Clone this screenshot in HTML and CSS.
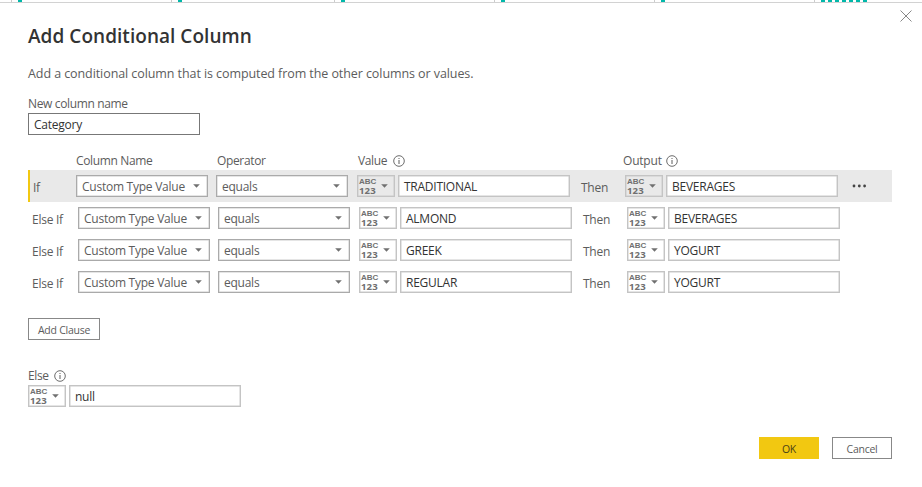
FILE: index.html
```html
<!DOCTYPE html>
<html lang="en">
<head>
<meta charset="utf-8">
<title>Add Conditional Column</title>
<link rel="stylesheet" href="styles.css">
</head>
<body>
<svg class="defs" width="0" height="0" aria-hidden="true">
  <symbol id="info" viewBox="0 0 12 12"><circle cx="6" cy="6" r="5.3" fill="none" stroke="currentColor" stroke-width=".9"/><path d="M6 5v4M6 3v1" fill="none" stroke="currentColor" stroke-width="1"/></symbol>
  <symbol id="caret" viewBox="0 0 7 4"><path d="M.2.2h6.6L3.5 3.8z" fill="currentColor"/></symbol>
</svg>
<div class="strip">
  <div class="cell c1"><i></i></div><div class="cell c2"><i></i></div><div class="cell c3"><i></i></div><div class="cell c4"><i></i></div><div class="cell c5"><i></i></div>
  <div class="cell c6"><i></i><i></i><i></i><i></i><i></i><i></i><i></i></div>
</div>
<button class="close" aria-label="Close"><svg width="12" height="12" viewBox="0 0 12 12"><path d="M.5.5l11 11M11.5.5l-11 11" fill="none" stroke="#888" stroke-width="1"/></svg></button>
<main class="dialog">
  <h1><span>Add Conditional Column</span></h1>
  <p class="desc"><span>Add a conditional column that is computed from the other columns or values.</span></p>
  <div class="label name-label"><span>New column name</span></div>
  <div class="input name"><span>Category</span></div>

  <div class="head">
    <span class="h-col">Column Name</span><span class="h-op">Operator</span><span class="h-val">Value</span><svg class="info"><use href="#info"/></svg><span class="h-out">Output</span><svg class="info"><use href="#info"/></svg>
  </div>
  <div class="clauses">
    <div class="clause active">
      <div class="kw">If</div>
      <div class="select"><span class="ctv">Custom Type Value</span><svg class="caret"><use href="#caret"/></svg></div>
      <div class="select"><span class="eq">equals</span><svg class="caret"><use href="#caret"/></svg></div>
      <div class="type"><span class="abc"><b>ABC</b><b class="num">123</b></span><svg class="caret"><use href="#caret"/></svg></div>
      <div class="input"><span>TRADITIONAL</span></div>
      <div class="then">Then</div>
      <div class="type"><span class="abc"><b>ABC</b><b class="num">123</b></span><svg class="caret"><use href="#caret"/></svg></div>
      <div class="input"><span>BEVERAGES</span></div>
      <svg class="more" width="15" height="4" viewBox="0 0 15 4"><g fill="#444"><circle cx="2" cy="2" r="1.4"/><circle cx="7.3" cy="2" r="1.4"/><circle cx="12.6" cy="2" r="1.4"/></g></svg>
    </div>
    <div class="clause">
      <div class="kw">Else If</div>
      <div class="select"><span class="ctv">Custom Type Value</span><svg class="caret"><use href="#caret"/></svg></div>
      <div class="select"><span class="eq">equals</span><svg class="caret"><use href="#caret"/></svg></div>
      <div class="type"><span class="abc"><b>ABC</b><b class="num">123</b></span><svg class="caret"><use href="#caret"/></svg></div>
      <div class="input"><span>ALMOND</span></div>
      <div class="then">Then</div>
      <div class="type"><span class="abc"><b>ABC</b><b class="num">123</b></span><svg class="caret"><use href="#caret"/></svg></div>
      <div class="input"><span>BEVERAGES</span></div>
    </div>
    <div class="clause">
      <div class="kw">Else If</div>
      <div class="select"><span class="ctv">Custom Type Value</span><svg class="caret"><use href="#caret"/></svg></div>
      <div class="select"><span class="eq">equals</span><svg class="caret"><use href="#caret"/></svg></div>
      <div class="type"><span class="abc"><b>ABC</b><b class="num">123</b></span><svg class="caret"><use href="#caret"/></svg></div>
      <div class="input"><span>GREEK</span></div>
      <div class="then">Then</div>
      <div class="type"><span class="abc"><b>ABC</b><b class="num">123</b></span><svg class="caret"><use href="#caret"/></svg></div>
      <div class="input"><span>YOGURT</span></div>
    </div>
    <div class="clause">
      <div class="kw">Else If</div>
      <div class="select"><span class="ctv">Custom Type Value</span><svg class="caret"><use href="#caret"/></svg></div>
      <div class="select"><span class="eq">equals</span><svg class="caret"><use href="#caret"/></svg></div>
      <div class="type"><span class="abc"><b>ABC</b><b class="num">123</b></span><svg class="caret"><use href="#caret"/></svg></div>
      <div class="input"><span>REGULAR</span></div>
      <div class="then">Then</div>
      <div class="type"><span class="abc"><b>ABC</b><b class="num">123</b></span><svg class="caret"><use href="#caret"/></svg></div>
      <div class="input"><span>YOGURT</span></div>
    </div>
  </div>
  <button class="btn add">Add Clause</button>
  <div class="label else-label"><span>Else</span><svg class="info"><use href="#info"/></svg></div>
  <div class="else-row">
    <div class="type"><span class="abc"><b>ABC</b><b class="num">123</b></span><svg class="caret"><use href="#caret"/></svg></div>
    <div class="input"><span>null</span></div>
  </div>
  <div class="actions"><button class="btn ok">OK</button><button class="btn">Cancel</button></div>
</main>
</body>
</html>
```
FILE: styles.css
```css
* { box-sizing: border-box; }
body { margin: 0; width: 922px; height: 487px; overflow: hidden; background: #fff; color: #5c5c5c; font: 12px/16px "Open Sans", "Noto Sans", sans-serif; letter-spacing: -.25px; }
.defs { position: absolute; }
.strip { display: flex; height: 3px; padding-left: 11px; border-bottom: 1px solid #d2d2d2; overflow: hidden; }
.cell { display: flex; flex: none; gap: 3px; width: 160px; height: 2px; padding-left: 6px; border-left: 1px solid #ccc; }
.c2 { width: 163px; }
.cell i { width: 4px; height: 2px; background: #01b8aa; }
.close { position: absolute; left: 900px; top: 10px; width: 12px; height: 12px; padding: 0; border: 0; background: none; display: block; }
.close svg { display: block; }
.dialog { padding: 0 30px 0 28px; white-space: nowrap; }
h1 { margin: 20px 0 0; height: 26px; font-size: 19px; line-height: 26px; font-weight: 600; color: #333; letter-spacing: .04px; }
.desc { margin: 16px 0 0; height: 18px; font-size: 12.5px; line-height: 18px; letter-spacing: -.08px; }
.label { height: 16px; display: flex; align-items: center; letter-spacing: -.35px; }
.name-label { margin-top: 12px; }
.name-label span { padding-top: 1px; }
.input, .select, .type { height: 22px; display: flex; align-items: center; border: 1px solid #c4c4c4; background: #fff; box-shadow: inset 0 0 0 .5px #ccc; }
.input { width: 172px; padding-left: 5px; color: #333; }
.input span, .select span { padding-top: 2px; }
.name { margin-top: 2px; border-color: #777; box-shadow: none; }
.info { width: 12px; height: 12px; flex: none; }
.head { display: flex; align-items: center; height: 16px; margin: 18px 0 1px 48px; letter-spacing: -.35px; }
.h-col { width: 141px; }
.h-op { width: 141px; }
.h-val { width: 35px; }
.h-out { margin-left: 218px; width: 43px; letter-spacing: -.2px; }
.clause { display: flex; align-items: center; height: 32px; width: 864px; padding-left: 4px; }
.active { background: #e9e9e9; border-left: 2px solid #f2c811; padding-left: 3px; }
.kw { width: 46px; }
.active .kw { width: 43px; }
.kw, .then { padding-top: 3px; }
.select { width: 132px; margin-right: 8px; padding: 0 7px 0 5px; justify-content: space-between; border-color: #aaa; }
.select + .select { margin-right: 9px; }
.caret { width: 7px; height: 4px; flex: none; color: #707070; }
.type { width: 38px; padding: 0 6px 0 1px; justify-content: space-between; margin-right: 3px; }
.active .type { background: transparent; }
.then { width: 55px; padding-left: 11px; }
.abc { width: 18px; display: block; }
.abc b { display: block; font: 700 8px/9px "Liberation Sans", sans-serif; color: #707070; letter-spacing: 0; }
.abc .num { font-family: "Open Sans", sans-serif; font-size: 9.6px; line-height: 9px; letter-spacing: .1px; }
.more { margin-left: 14px; }
.btn { width: 60px; height: 22px; padding: 1px 0 0; border: 1px solid #888; background: #fff; color: #5c5c5c; font: 10.5px/18px "Open Sans", sans-serif; letter-spacing: -.25px; }
.add { display: block; width: 72px; margin-top: 20px; }
.else-label { margin-top: 28px; gap: 5px; }
.else-row { display: flex; margin-top: 1px; }
.actions { display: flex; justify-content: flex-end; gap: 13px; margin-top: 30px; }
.ok { background: #f2c811; border-color: #f2c811; color: #4a4217; }
```
